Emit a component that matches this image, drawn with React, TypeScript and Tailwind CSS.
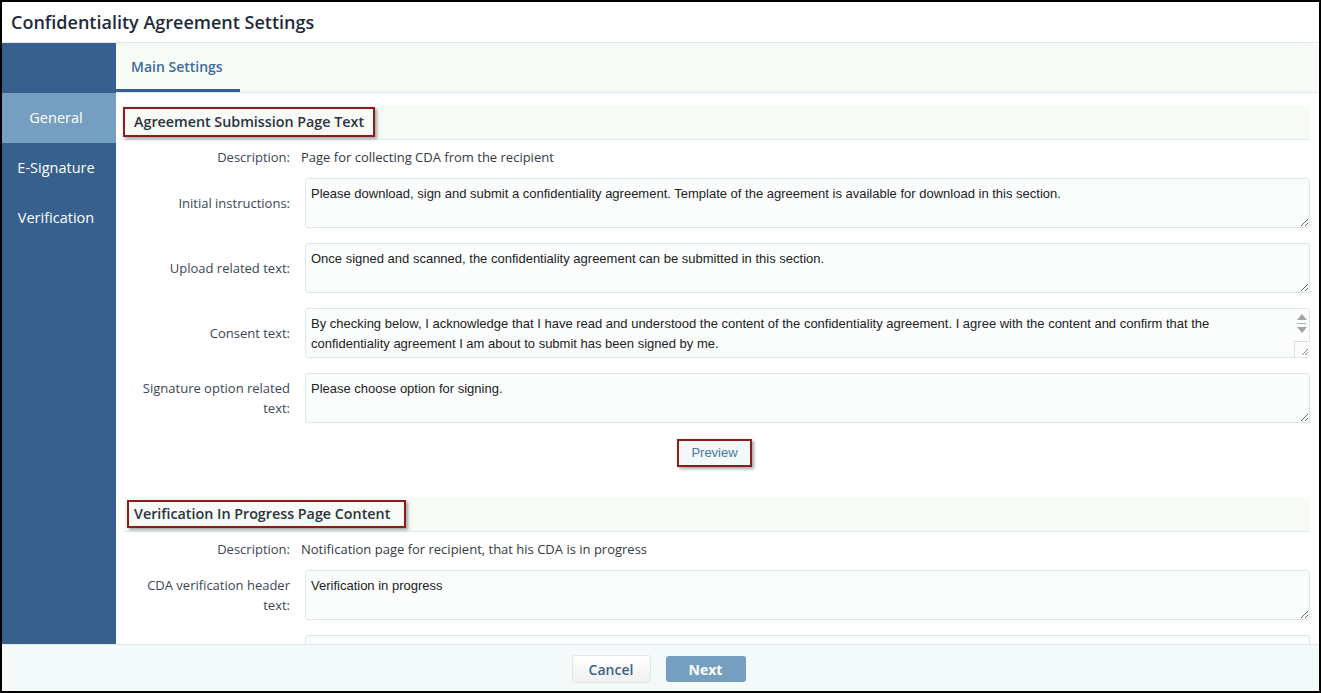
import React from 'react';

const sans = { fontFamily: '"Open Sans", "Liberation Sans", sans-serif' };
const arial = { fontFamily: '"Liberation Sans", Arial, sans-serif' };

interface FieldProps {
  label: React.ReactNode;
  value: string;
  scroll?: boolean;
  first?: boolean;
}

const SectionHeader: React.FC<{ title: string; inset?: boolean }> = ({ title, inset }) => (
  <div className="flex items-center h-[35px] bg-[#f7fbf5] border-b border-[#e1e9f0]">
    <div
      className={`${inset ? 'ml-[4px] h-[28px] pl-[5px] pr-[14px]' : 'h-[30px] px-[9px]'} flex items-center border-2 border-[#8e1b1b] shadow-[2px_2px_3px_rgba(0,0,0,0.35)] bg-[#f7fbf5] text-[14.3px] font-semibold text-[#2b3340]`}
    >
      {title}
    </div>
  </div>
);

const DescriptionRow: React.FC<{ text: string }> = ({ text }) => (
  <div className="flex items-center h-[20px] mt-[8px] text-[13px]">
    <div className="w-[167px] text-right text-[#3b4656]">Description:</div>
    <div className="ml-[11px] text-[#333a44]">{text}</div>
  </div>
);

// fake classic scrollbar arrows, drawn over the textarea
const ScrollArrows = () => (
  <div className="absolute right-[1px] top-[1px] bottom-[1px] w-[15px] flex flex-col items-center pointer-events-none">
    <div className="mt-[5px] w-0 h-0 border-l-[5px] border-r-[5px] border-b-[6px] border-l-transparent border-r-transparent border-b-[#a3a3a3]" />
    <div className="mt-[3px] w-[9px] h-px bg-[#b5b5b5]" />
    <div className="mt-[3px] w-0 h-0 border-l-[5px] border-r-[5px] border-t-[6px] border-l-transparent border-r-transparent border-t-[#a3a3a3]" />
    <div className="mt-auto w-[16px] h-[16px] border-l border-t border-[#dcdcdc] bg-[#fbfdfd] flex items-end justify-end">
      <svg width="8" height="8" viewBox="0 0 8 8" className="mr-[1px] mb-[1px]">
        <path d="M7 1 L1 7 M7 4 L4 7" stroke="#8a8a8a" strokeWidth="1" />
      </svg>
    </div>
  </div>
);

const Field: React.FC<FieldProps> = ({ label, value, scroll, first }) => (
  <div className={`flex items-center ${first ? 'mt-[10px]' : 'mt-[15px]'}`}>
    <div className="w-[167px] text-right text-[13px] leading-[20px] text-[#3b4656]">{label}</div>
    <div className="relative ml-[15px]">
      <textarea
        readOnly
        value={value}
        className={`block w-[1005px] h-[50px] rounded-[3px] border border-[#dde6ee] bg-[#fbfdfd] pl-[5px] pt-[5px] pb-[4px] text-[13px] leading-[20px] text-[#222] outline-none overflow-hidden ${scroll ? 'pr-[24px] resize-none' : 'pr-[5px]'}`}
        style={arial}
      />
      {scroll && <ScrollArrows />}
    </div>
  </div>
);

export default function App() {
  return (
    <div className="w-[1321px] h-[693px] bg-black p-[2px]" style={sans}>
      <div className="flex flex-col h-full bg-white">
        {/* Title */}
        <div className="h-[41px] shrink-0 flex items-center pl-[9px] border-b border-[#dfe7ef] text-[18px] font-semibold text-[#1f2b3b]">
          Confidentiality Agreement Settings
        </div>

        <div className="flex flex-1 min-h-0">
          {/* Sidebar */}
          <div className="w-[114px] shrink-0 bg-[#37608f] flex flex-col text-white text-[14.5px] font-medium">
            <div className="h-[50px]" />
            <div className="h-[50px] flex items-center justify-center pr-[6px] bg-[#769ec0]">General</div>
            <div className="h-[50px] flex items-center justify-center pr-[6px]">E-Signature</div>
            <div className="h-[50px] flex items-center justify-center pr-[6px]">Verification</div>
          </div>

          {/* Main */}
          <div className="flex-1 flex flex-col min-w-0">
            <div className="h-[50px] shrink-0 flex bg-[#f7fbf5] border-b border-[#dfe7ef]">
              <div className="w-[124px] h-full flex items-center pl-[15px] border-b-[3px] border-[#37608f] text-[14px] font-semibold text-[#3e6b9f]">
                Main Settings
              </div>
            </div>

            <div className="flex-1 overflow-hidden pl-[7px] pr-[9px] pt-[12px]">
              <SectionHeader title="Agreement Submission Page Text" />
              <DescriptionRow text="Page for collecting CDA from the recipient" />
              <Field
                first
                label="Initial instructions:"
                value="Please download, sign and submit a confidentiality agreement. Template of the agreement is available for download in this section."
              />
              <Field
                label="Upload related text:"
                value="Once signed and scanned, the confidentiality agreement can be submitted in this section."
              />
              <Field
                label="Consent text:"
                scroll
                value="By checking below, I acknowledge that I have read and understood the content of the confidentiality agreement. I agree with the content and confirm that the confidentiality agreement I am about to submit has been signed by me."
              />
              <Field
                label={
                  <>
                    Signature option related
                    <br />
                    text:
                  </>
                }
                value="Please choose option for signing."
              />

              <div className="flex justify-center mt-[16px] pr-[4px]">
                <button
                  className="h-[28px] px-[12px] border-2 border-[#8e1b1b] bg-[#f3f9f9] shadow-[2px_2px_3px_rgba(0,0,0,0.35)] text-[13px] text-[#4a76a8]"
                  style={arial}
                >
                  Preview
                </button>
              </div>

              <div className="mt-[30px]">
                <SectionHeader title="Verification In Progress Page Content" inset />
              </div>
              <DescriptionRow text="Notification page for recipient, that his CDA is in progress" />
              <Field
                first
                label={
                  <>
                    CDA verification header
                    <br />
                    text:
                  </>
                }
                value="Verification in progress"
              />
              <Field label="" value="" />
            </div>
          </div>
        </div>

        {/* Footer */}
        <div className="h-[47px] shrink-0 flex items-center justify-center gap-[15px] pr-[4px] pt-[2px] bg-[#f4f9f9] border-t border-[#dfe7ef]">
          <button className="w-[79px] h-[28px] rounded-[3px] border border-[#e3e6e8] bg-gradient-to-b from-white to-[#f0f0f0] text-[14px] font-semibold text-[#3e5f8a]">
            Cancel
          </button>
          <button className="w-[80px] h-[26px] rounded-[3px] bg-[#769ec0] text-[14px] font-bold text-white">
            Next
          </button>
        </div>
      </div>
    </div>
  );
}
